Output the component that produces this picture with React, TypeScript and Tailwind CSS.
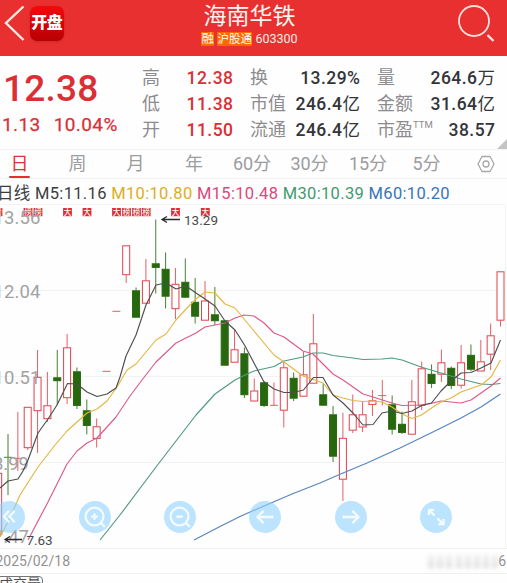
import React from 'react';

type Candle = [high: number, top: number, bottom: number, low: number, rising: 0 | 1];

// Vertical chart positions for each session, oldest first.
const candles: Candle[] = [
  [473, 473, 535, 535, 1],
  [434, 457, 458, 495, 0], [412, 458, 459, 471, 1], [407, 407, 448, 450, 1],
  [350, 377, 411, 453, 1], [372, 405.5, 419, 422, 1], [350, 377.5, 381, 405, 0],
  [334, 347.5, 398, 404, 1], [367.5, 371.5, 405.7, 409, 0], [399.5, 410.5, 425.7, 434.5, 0],
  [418.5, 426.5, 438.7, 447.5, 1], [371.5, 371, 372, 371.5, 1], [311.5, 311, 312, 311.5, 1],
  [245.5, 245.5, 275, 283, 1], [287.5, 290.5, 317.5, 317.5, 0], [259, 280.5, 303.5, 303.5, 1],
  [219.5, 263.5, 267.7, 293.5, 0], [252.5, 269, 296.5, 308.5, 0], [268, 284, 309, 319, 1],
  [258.5, 282, 297.5, 297.5, 0], [278, 302, 316.5, 323.5, 0], [281, 300.7, 320.5, 320.5, 1],
  [287, 314.5, 321, 325, 0], [320.5, 320.5, 365.5, 365.5, 0], [329, 349.5, 362.5, 362.5, 1],
  [347.5, 353.5, 395, 398, 0], [378.5, 390.7, 401.3, 401.3, 1], [381, 382.5, 405.7, 407, 0],
  [382.5, 405, 406, 406, 1], [361, 367.5, 410.5, 427.5, 1], [372.5, 378, 398.5, 401, 0],
  [351.5, 374.5, 396.5, 396.5, 1], [314, 343.5, 383.5, 383.5, 1], [383.5, 394.5, 405.5, 405.5, 0],
  [406, 414.5, 456.5, 462, 0], [412.7, 438, 479.5, 501, 1], [394.5, 414.5, 430.5, 433, 1],
  [402, 414.5, 427.3, 432, 1], [390, 400.5, 404.7, 416, 1], [380, 395.3, 396.5, 405.5, 1],
  [395.5, 404.5, 429.5, 434.5, 0], [411.5, 424, 432.7, 434, 0], [380, 401.5, 434.5, 434.5, 1],
  [361.5, 368.5, 405.5, 410, 1], [364.5, 374, 383.7, 388, 0], [349.5, 362.5, 374.5, 382, 1],
  [366.5, 368, 385.7, 389, 0], [345, 362.5, 385.5, 388.5, 1], [344.5, 355, 369.5, 371, 0],
  [340, 361.5, 371.3, 371.3, 1], [323.5, 335.5, 354.5, 370, 1], [271.5, 271.5, 320.5, 326.5, 1],
];

const averages = [
  { color: '#4f9a80', points: '100,540 120,515 156,467 196,415 215,394 225,387 235,380 245,375 254,371 274,366.5 284,361 303,357 313,353 323,353 333,355.5 353,358 363,359.5 382,359 392,358 402,360 421,367 441,373 461,379 481,384 491,384.5 500.5,383.5' },
  { color: '#5585bf', points: '194,540 220,526.5 240,516.5 250,512 292,494 320,483 343,473 367,463 400,448 437,430 461,418 481,407 500.5,394' },
  { color: '#dc5a8a', points: '28,540 48,502 67,464 77,451 87,443 97,438 116,417 130,396 142,380 156,362 176,343 196,333 205,327 225,323 235,318 244,315 254,316 264,323 274,333 284,337 303,351 313,354 333,374 343,380 363,394 373,397 392,403 402,405.5 421.5,405 431,403.5 441,401 461,403 471,400 481,393 491,386 500.5,378' },
  { color: '#e2b742', points: '0,537 9,520 20,495 38,467 55,445 67,431 77,422 87,413 97,409 107,401 117,387 127,370 136,364 146,352 156,340 166,334 176,320 186,309 196,299 205,292 215,293 225,304 235,308 244,319 254,331 274,355 284,362 303,376 323,383 333,395 343,398 353,400.5 363,401.5 373,401 382,402 392,407 402,414 412,418.5 421.5,415 431.5,408 441,402 451,398 461,392 481,385 491,377 500.5,360' },
  { color: '#4e4e50', points: '0,488 8,481 18,479 23,471 28,460 38,433 48,419 57,405 67.5,383.5 77,384 87,392 97,396.5 107,394 116,388 120,377 126,356 136,335 146,305 156,285 166,283 176,289 186,286 196,293 205,299 215,306 225,321 235,330 244.5,345 254,363 264,382 274,389 284,392.5 293.5,392.5 303.5,390 313.5,377.5 323,377.5 333,395 343,403 353,413 363,425 373,424.5 382,413 392,411 402,413.5 412,411 421.5,405.5 431.5,403 441,391 451,381 461,373 471,372.5 481,368 491,363 500.5,340' },
];

const badges: [number, string][] = [
  [-2, '榜'], [28, '榜'], [38, '榜'], [67.5, '大'], [87, '大'], [116.5, '大'],
  [126.5, '榜'], [136.5, '榜'], [146.2, '榜'], [175.5, '大'], [205.3, '大'],
];

const prices: [string, number][] = [['13.56', 223.5], ['12.04', 297.5], ['10.51', 384], ['8.99', 470], ['7.47', 543]];

function Chart() {
  return (
    <svg className="block h-[344px] w-full shrink-0" viewBox="0 204 507 344" fontFamily="Roboto, 'Noto Sans CJK SC', sans-serif">
      <path d="M0 204.5H505.5V548M0 290.5H505M0 376.5H505M0 462.5H505" fill="none" stroke="#f3f3f4" />
      {candles.map(([high, top, bottom, low, rising], i) => {
        const x = -1.85 + i * 9.85;
        const color = rising ? '#e2404c' : '#27680f';
        if (bottom - top <= 1.3) {
          return <path key={i} d={`M${x} ${high}V${low}M${x - 4} ${top + 0.3}H${x + 4}`} stroke={color} strokeWidth="1" opacity="0.85" />;
        }
        return (
          <g key={i} stroke={color} strokeWidth="1">
            <path d={`M${x} ${high}V${top}M${x} ${bottom}V${low}`} opacity="0.85" />
            <rect x={x - 3.5} y={top + 0.3} width="7" height={bottom - top - 0.6} fill={rising ? '#ffffff' : color} />
          </g>
        );
      })}
      {badges.map(([x, label]) => (
        <g key={x}>
          <rect x={x - 4.4} y="208" width="8.8" height="8.2" fill="#df2c37" />
          <text x={x} y="215" textAnchor="middle" fontSize="7.5" fontWeight="500" fill="#fff">{label}</text>
        </g>
      ))}
      <g fill="#a2a2a2" fontSize="18.5">
        {prices.map(([label, y], i) => (
          <text key={label} x={i > 2 ? 29 : 40.5} y={y} textAnchor="end" textLength={i > 2 ? 36 : 47}>{label}</text>
        ))}
      </g>
      {averages.map((line) => (
        <polyline key={line.color} points={line.points} fill="none" stroke={line.color} strokeWidth="1.15" strokeLinejoin="round" />
      ))}
      <g stroke="#29292b" strokeWidth="1.3" fill="none">
        <path d="M180 219.5H163M167 216.5L162 219.5L167 222.5" />
        <path d="M22 539.5H6M10 536.5L5 539.5L10 542.5" />
      </g>
      <g fill="#4a4a4d" fontSize="13.5">
        <text x="184" y="225" textLength="34">13.29</text>
        <text x="26.5" y="544.5" textLength="26">7.63</text>
      </g>
    </svg>
  );
}

const controls = [
  { name: 'rewind', left: 'left-[-7px]', d: 'M17 10.5l-5.5 6 5.5 6M23 10.5l-5.5 6 5.5 6' },
  { name: 'zoom in', left: 'left-[78.5px]', d: 'M22.5 22.5l5 5M26 16.5a9.5 9.5 0 1 1-19 0a9.5 9.5 0 1 1 19 0M13 16.5h7M16.5 13v7' },
  { name: 'zoom out', left: 'left-[164px]', d: 'M22.5 22.5l5 5M26 16.5a9.5 9.5 0 1 1-19 0a9.5 9.5 0 1 1 19 0M13 16.5h7' },
  { name: 'left', left: 'left-[249px]', d: 'M26 17H9M15.5 10.5l-6.5 6.5 6.5 6.5' },
  { name: 'right', left: 'left-[334.5px]', d: 'M8 17h17M18.5 10.5l6.5 6.5-6.5 6.5' },
  { name: 'expand', left: 'left-[420px]', d: 'M9.5 15V9.5H15M10 10l5.5 5.5M18.5 18.5l6 6M25 19V24.5H19.5' },
];

function Stat({ label, value, unit = '', sup = '', red = false }: { label: string; value: string; unit?: string; sup?: string; red?: boolean }) {
  return (
    <div className="flex h-[26px] items-center justify-between whitespace-nowrap text-[18px] leading-[26px] text-[#8c8c8e]">
      <span className="flex">{label}{sup && <span className="-mt-[5px] text-[9.5px]">{sup}</span>}</span>
      <span className={red ? 'text-[17.5px] font-medium tracking-[0.45px] text-[#d93036]' : 'text-[17.5px] font-medium tracking-[0.45px] text-[#343538]'}>
        {value}<span className="-mr-[0.45px] font-normal">{unit}</span>
      </span>
    </div>
  );
}

const tabs = ['日', '周', '月', '年', '60分', '30分', '15分', '5分'];

export default function App() {
  return (
    <div className="relative flex h-[583px] w-[507px] flex-col overflow-hidden bg-[#fefefe] font-[Roboto,'Noto_Sans_CJK_SC',sans-serif]">
      <header className="flex h-[55.5px] shrink-0 justify-between bg-[#e83030] text-white">
        <div className="flex w-[110px] pt-[5px]">
          <svg className="h-[36px] w-[29.5px] shrink-0" viewBox="0 0 29.5 36" fill="none" stroke="#ffe9df" strokeWidth="2.4"><path d="M23.5 1.5L6 18L23.5 35" /></svg>
          <div className="mt-px flex h-[34.5px] w-[34.5px] items-center justify-center rounded-[7px] bg-gradient-to-b from-[#f30a0c] to-[#b70004] text-[16px] font-black tracking-[-0.5px] shadow-sm">开盘</div>
        </div>
        <div className="-ml-[8px] flex flex-col items-center">
          <div className="pt-[3px] text-[23px] leading-[27px] text-[#fff4ef]">海南华铁</div>
          <div className="mt-[2px] flex h-[14px] items-center gap-[3px] text-[12.5px] leading-[14px]">
            <span className="bg-[#ff6900]">融</span>
            <span className="bg-[#ff6900] px-[0.5px] text-[11.5px]">沪股通</span>
            <span className="text-[12.5px] text-[#ffeae4]">603300</span>
          </div>
        </div>
        <div className="flex w-[110px] justify-end pr-3 pt-[4px]">
          <svg className="h-[40px] w-[40px]" viewBox="0 0 40 40" fill="none" stroke="#ffe1db" strokeWidth="1.8"><circle cx="19" cy="17" r="15" /><path d="M32.5 31l6 6" strokeWidth="2.4" /></svg>
        </div>
      </header>

      <section className="relative flex h-[94px] shrink-0 border-b border-[#f3f3f3] pt-[9px]">
        <div className="w-[142px] shrink-0 text-[#d93036]">
          <div className="pl-[3px] pt-[4px] text-[37px] font-medium leading-[40px] tracking-[0.2px]">12.38</div>
          <div className="flex gap-[13px] whitespace-nowrap pl-[2px] pt-[3px] text-[19px] leading-[26px] tracking-[0.4px] [-webkit-text-stroke:0.25px_#d93036]"><span>1.13</span><span>10.04%</span></div>
        </div>
        <div className="w-[91px] shrink-0">
          <Stat label="高" value="12.38" red /><Stat label="低" value="11.38" red /><Stat label="开" value="11.50" red />
        </div>
        <div className="ml-[17px] w-[110px] shrink-0">
          <Stat label="换" value="13.29%" /><Stat label="市值" value="246.4" unit="亿" /><Stat label="流通" value="246.4" unit="亿" />
        </div>
        <div className="ml-[17px] w-[118px] shrink-0">
          <Stat label="量" value="264.6" unit="万" /><Stat label="金额" value="31.64" unit="亿" /><Stat label="市盈" sup="TTM" value="38.57" />
        </div>
        <svg className="absolute right-0 bottom-0 h-[10px] w-[10px]" viewBox="0 0 10 10"><path d="M10 0V10H0z" fill="#c4c4c4" /></svg>
      </section>

      <nav className="flex h-[29.5px] shrink-0 justify-between border-b border-[#f3f3f3] text-[18px] leading-[27px] text-[#9c9c9e]">
        <div className="grid w-[465px] grid-cols-[39px_77px_39px_78px_38px_77px_40px_77px]">
          {tabs.map((tab, i) => (
            <span key={tab} className={i === 0 ? 'relative flex justify-center text-[#e32f34] after:absolute after:bottom-0 after:left-[9px] after:h-[2.5px] after:w-[21px] after:rounded-full after:bg-[#e32f34]' : 'flex justify-center whitespace-nowrap'}>{tab}</span>
          ))}
        </div>
        <svg className="mr-3 mt-[5.5px] h-[18px] w-[18px]" viewBox="0 0 18 18" fill="none" stroke="#a7a7a7" strokeWidth="1.3"><path d="M5 1.5h8L17 9l-4 7.5H5L1 9z" strokeLinejoin="round" /><circle cx="9" cy="9" r="3" /></svg>
      </nav>

      <div className="flex h-[25px] shrink-0 items-center gap-[4.5px] whitespace-nowrap pt-[5px] text-[16.5px] leading-[22px] tracking-[0.32px]">
        <span className="-ml-[3px] text-[#3c3c3e]">日线 M5:11.16</span>
        <span className="text-[#dcad1c]">M10:10.80</span>
        <span className="text-[#dc477c]">M15:10.48</span>
        <span className="text-[#439a70]">M30:10.39</span>
        <span className="text-[#3974b7]">M60:10.20</span>
      </div>

      <Chart />

      {controls.map((control) => (
        <button key={control.name} aria-label={control.name} className={`absolute top-[500.5px] h-8 w-8 rounded-full bg-[#8fd2ff]/60 ${control.left}`}>
          <svg className="h-8 w-8" viewBox="0 0 34 34" fill="none" stroke="#f3fbff" strokeWidth="2.4"><path d={control.d} /></svg>
        </button>
      ))}

      <footer className="flex h-[26px] shrink-0 items-center justify-between border-y border-[#f1f1f2] text-[14px] leading-[26px] text-[#929294]">
        <span className="-ml-[4.5px]">2025/02/18</span>
        <div className="flex items-center pr-[1px]">
          <span className="flex h-[14px] w-[70px] justify-between opacity-60 blur-[2px]">
            {[0, 1, 2, 3, 4, 5, 6, 7].map((n) => <i key={n} className="w-[6px] bg-gradient-to-b from-[#efefef] to-[#c8c8c8]" />)}
          </span>
          <span>6</span>
        </div>
      </footer>
      <div className="h-[9px] shrink-0 overflow-hidden pt-[2px]">
        <div className="-ml-1 h-5 w-[47px] whitespace-nowrap rounded-sm border border-[#77777a] pl-[2px] text-[14px] leading-[14px] text-[#4b4b4d]">成交量</div>
      </div>
    </div>
  );
}
